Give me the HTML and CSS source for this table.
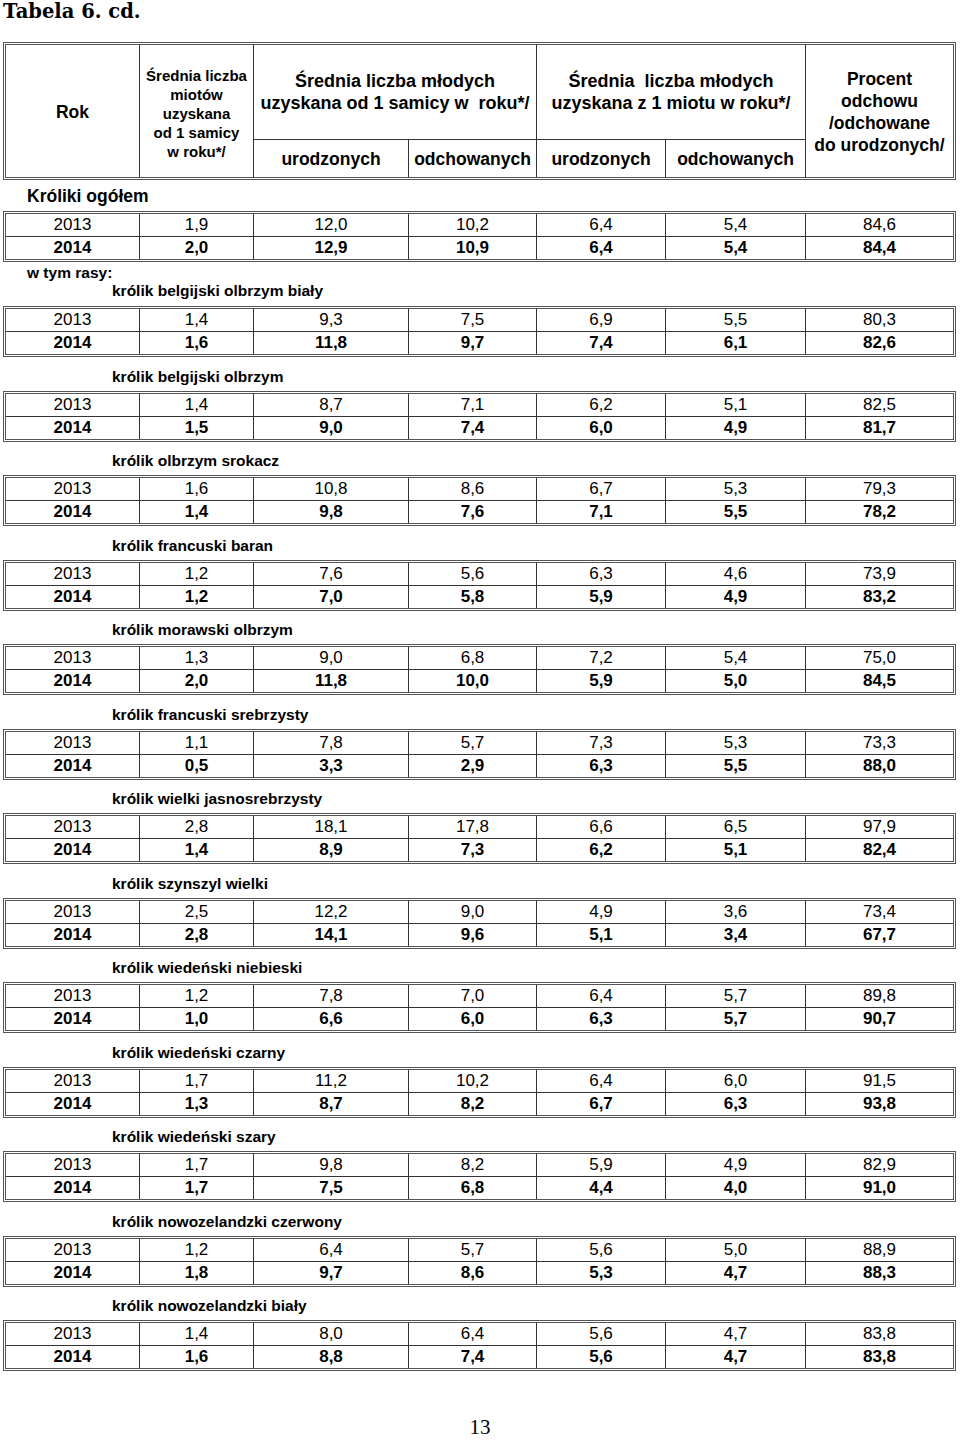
FILE: index.html
```html
<!DOCTYPE html>
<html lang="pl">
<head>
<meta charset="utf-8">
<title>Tabela 6. cd.</title>
<link rel="stylesheet" href="styles.css">
</head>
<body>
<div class="page">
  <div class="title">Tabela 6. cd.</div>

  <div class="head">
    <div class="hc rok">Rok</div>
    <div class="hc miot">Średnia liczba<br>miotów<br>uzyskana<br>od 1 samicy<br>w roku*/</div>
    <div class="hc grp g1">Średnia liczba młodych<br>uzyskana od 1 samicy w&nbsp; roku*/</div>
    <div class="hc grp g2">Średnia&nbsp; liczba młodych<br>uzyskana z 1 miotu w roku*/</div>
    <div class="hc proc">Procent<br>odchowu<br>/odchowane<br>do urodzonych/</div>
    <div class="hc sub s1">urodzonych</div>
    <div class="hc sub s2">odchowanych</div>
    <div class="hc sub s3">urodzonych</div>
    <div class="hc sub s4">odchowanych</div>
  </div>

  <div class="lbl-main">Króliki ogółem</div>
  <div class="tbl">
    <div class="row"><span>2013</span><span>1,9</span><span>12,0</span><span>10,2</span><span>6,4</span><span>5,4</span><span>84,6</span></div>
    <div class="row b"><span>2014</span><span>2,0</span><span>12,9</span><span>10,9</span><span>6,4</span><span>5,4</span><span>84,4</span></div>
  </div>

  <div class="lbl-group">
    <div class="lbl-rasy">w tym rasy:</div>
    <div class="lbl-breed">królik belgijski olbrzym biały</div>
  </div>
  <div class="tbl">
    <div class="row"><span>2013</span><span>1,4</span><span>9,3</span><span>7,5</span><span>6,9</span><span>5,5</span><span>80,3</span></div>
    <div class="row b"><span>2014</span><span>1,6</span><span>11,8</span><span>9,7</span><span>7,4</span><span>6,1</span><span>82,6</span></div>
  </div>

  <div class="lbl">królik belgijski olbrzym</div>
  <div class="tbl">
    <div class="row"><span>2013</span><span>1,4</span><span>8,7</span><span>7,1</span><span>6,2</span><span>5,1</span><span>82,5</span></div>
    <div class="row b"><span>2014</span><span>1,5</span><span>9,0</span><span>7,4</span><span>6,0</span><span>4,9</span><span>81,7</span></div>
  </div>

  <div class="lbl">królik olbrzym srokacz</div>
  <div class="tbl">
    <div class="row"><span>2013</span><span>1,6</span><span>10,8</span><span>8,6</span><span>6,7</span><span>5,3</span><span>79,3</span></div>
    <div class="row b"><span>2014</span><span>1,4</span><span>9,8</span><span>7,6</span><span>7,1</span><span>5,5</span><span>78,2</span></div>
  </div>

  <div class="lbl">królik francuski baran</div>
  <div class="tbl">
    <div class="row"><span>2013</span><span>1,2</span><span>7,6</span><span>5,6</span><span>6,3</span><span>4,6</span><span>73,9</span></div>
    <div class="row b"><span>2014</span><span>1,2</span><span>7,0</span><span>5,8</span><span>5,9</span><span>4,9</span><span>83,2</span></div>
  </div>

  <div class="lbl">królik morawski olbrzym</div>
  <div class="tbl">
    <div class="row"><span>2013</span><span>1,3</span><span>9,0</span><span>6,8</span><span>7,2</span><span>5,4</span><span>75,0</span></div>
    <div class="row b"><span>2014</span><span>2,0</span><span>11,8</span><span>10,0</span><span>5,9</span><span>5,0</span><span>84,5</span></div>
  </div>

  <div class="lbl">królik francuski srebrzysty</div>
  <div class="tbl">
    <div class="row"><span>2013</span><span>1,1</span><span>7,8</span><span>5,7</span><span>7,3</span><span>5,3</span><span>73,3</span></div>
    <div class="row b"><span>2014</span><span>0,5</span><span>3,3</span><span>2,9</span><span>6,3</span><span>5,5</span><span>88,0</span></div>
  </div>

  <div class="lbl">królik wielki jasnosrebrzysty</div>
  <div class="tbl">
    <div class="row"><span>2013</span><span>2,8</span><span>18,1</span><span>17,8</span><span>6,6</span><span>6,5</span><span>97,9</span></div>
    <div class="row b"><span>2014</span><span>1,4</span><span>8,9</span><span>7,3</span><span>6,2</span><span>5,1</span><span>82,4</span></div>
  </div>

  <div class="lbl">królik szynszyl wielki</div>
  <div class="tbl">
    <div class="row"><span>2013</span><span>2,5</span><span>12,2</span><span>9,0</span><span>4,9</span><span>3,6</span><span>73,4</span></div>
    <div class="row b"><span>2014</span><span>2,8</span><span>14,1</span><span>9,6</span><span>5,1</span><span>3,4</span><span>67,7</span></div>
  </div>

  <div class="lbl">królik wiedeński niebieski</div>
  <div class="tbl">
    <div class="row"><span>2013</span><span>1,2</span><span>7,8</span><span>7,0</span><span>6,4</span><span>5,7</span><span>89,8</span></div>
    <div class="row b"><span>2014</span><span>1,0</span><span>6,6</span><span>6,0</span><span>6,3</span><span>5,7</span><span>90,7</span></div>
  </div>

  <div class="lbl">królik wiedeński czarny</div>
  <div class="tbl">
    <div class="row"><span>2013</span><span>1,7</span><span>11,2</span><span>10,2</span><span>6,4</span><span>6,0</span><span>91,5</span></div>
    <div class="row b"><span>2014</span><span>1,3</span><span>8,7</span><span>8,2</span><span>6,7</span><span>6,3</span><span>93,8</span></div>
  </div>

  <div class="lbl">królik wiedeński szary</div>
  <div class="tbl">
    <div class="row"><span>2013</span><span>1,7</span><span>9,8</span><span>8,2</span><span>5,9</span><span>4,9</span><span>82,9</span></div>
    <div class="row b"><span>2014</span><span>1,7</span><span>7,5</span><span>6,8</span><span>4,4</span><span>4,0</span><span>91,0</span></div>
  </div>

  <div class="lbl">królik nowozelandzki czerwony</div>
  <div class="tbl">
    <div class="row"><span>2013</span><span>1,2</span><span>6,4</span><span>5,7</span><span>5,6</span><span>5,0</span><span>88,9</span></div>
    <div class="row b"><span>2014</span><span>1,8</span><span>9,7</span><span>8,6</span><span>5,3</span><span>4,7</span><span>88,3</span></div>
  </div>

  <div class="lbl">królik nowozelandzki biały</div>
  <div class="tbl">
    <div class="row"><span>2013</span><span>1,4</span><span>8,0</span><span>6,4</span><span>5,6</span><span>4,7</span><span>83,8</span></div>
    <div class="row b"><span>2014</span><span>1,6</span><span>8,8</span><span>7,4</span><span>5,6</span><span>4,7</span><span>83,8</span></div>
  </div>

  <div class="pagenum">13</div>
</div>
</body>
</html>
```

FILE: styles.css
```css
* {
  box-sizing: border-box;
}

html, body {
  margin: 0;
  padding: 0;
  background: #ffffff;
}

body {
  font-family: "Liberation Sans", Arial, sans-serif;
  color: #000;
}

.page {
  width: 960px;
  height: 1440px;
  overflow: hidden;
}

.title {
  font-family: "DejaVu Serif", "Liberation Serif", serif;
  font-weight: bold;
  font-size: 19.5px;
  line-height: 24px;
  padding-left: 3px;
  margin-bottom: 18px;
}

/* header */
.head {
  margin-left: 3px;
  width: 953px;
  border: 3px double #555;
  display: grid;
  grid-template-columns: 133px 114px 155px 128px 129px 140px 148px;
  grid-template-rows: 95px 37px;
  font-weight: bold;
}

.hc {
  display: flex;
  align-items: center;
  justify-content: center;
  text-align: center;
}

.rok {
  grid-column: 1;
  grid-row: 1 / 3;
  font-size: 17.5px;
  padding-top: 2px;
}

.miot {
  grid-column: 2;
  grid-row: 1 / 3;
  border-left: 1px solid #333;
  font-size: 15px;
  line-height: 19px;
  padding-top: 4px;
}

.grp {
  grid-row: 1;
  border-left: 1px solid #333;
  border-bottom: 1px solid #333;
  font-size: 18px;
  line-height: 22px;
}

.g1 {
  grid-column: 3 / 5;
}

.g2 {
  grid-column: 5 / 7;
}

.proc {
  grid-column: 7;
  grid-row: 1 / 3;
  border-left: 1px solid #333;
  font-size: 17.5px;
  line-height: 22px;
  padding-top: 2px;
}

.sub {
  grid-row: 2;
  border-left: 1px solid #333;
  font-size: 17.5px;
  padding-top: 2px;
}

.s1 { grid-column: 3; }
.s2 { grid-column: 4; }
.s3 { grid-column: 5; }
.s4 { grid-column: 6; }

/* labels */
.lbl-main {
  font-weight: bold;
  font-size: 17.5px;
  line-height: 18px;
  padding: 7px 0 6px 27px;
}

.lbl-group {
  padding: 1.5px 0 6.5px 0;
  font-weight: bold;
  font-size: 15.5px;
  line-height: 18px;
}

.lbl-rasy {
  padding-left: 27px;
}

.lbl-breed {
  padding-left: 112px;
}

.lbl {
  font-weight: bold;
  font-size: 15.5px;
  line-height: 18px;
  padding: 10.5px 0 5px 112px;
}

/* data tables */
.tbl {
  margin-left: 3px;
  width: 953px;
  border: 3px double #555;
}

.row {
  display: grid;
  grid-template-columns: 133px 114px 155px 128px 129px 140px 148px;
  height: 22px;
  font-size: 17px;
  line-height: 22px;
}

.row + .row {
  height: 23px;
  border-top: 1px solid #333;
}

.row > span {
  text-align: center;
}

.row > span + span {
  border-left: 1px solid #333;
}

.row.b {
  font-weight: bold;
}

.pagenum {
  margin-top: 47px;
  text-align: center;
  font-family: "Liberation Serif", "Times New Roman", serif;
  font-size: 21px;
  line-height: 19px;
}
```
